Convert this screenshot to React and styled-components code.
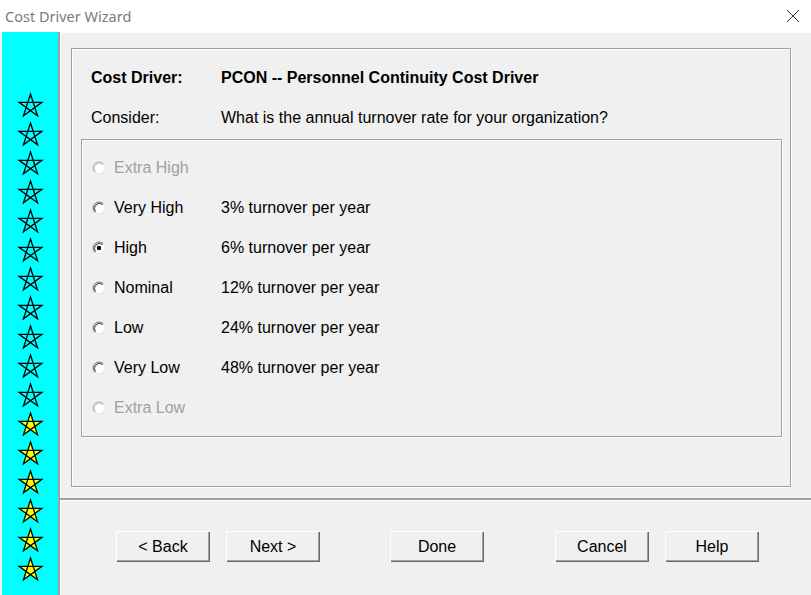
import React, { useState } from "react";
import styled, { createGlobalStyle } from "styled-components";

const GlobalStyle = createGlobalStyle`
  html, body {
    margin: 0;
    padding: 0;
    background: #f0f0f0;
  }
  body {
    font-family: "Liberation Sans", Arial, sans-serif;
  }
`;

const Window = styled.div`
  width: 811px;
  height: 595px;
  display: flex;
  flex-direction: column;
  overflow: hidden;
  background: #f0f0f0;
`;

const TitleBar = styled.div`
  height: 32px;
  flex: none;
  background: #fff;
  display: flex;
  align-items: center;
  justify-content: space-between;
  padding: 0 11px 0 5px;
  box-sizing: border-box;
`;

const Title = styled.span`
  font-family: "Noto Sans", "Open Sans", sans-serif;
  font-size: 14.5px;
  color: #7a7a7a;
`;

const Body = styled.div`
  flex: 1;
  display: flex;
  min-height: 0;
`;

const Sidebar = styled.div`
  width: 56px;
  flex: none;
  margin-left: 2px;
  background: #00ffff;
  border-right: 2px solid #a0a0a0;
  display: flex;
  flex-direction: column;
  align-items: center;
  padding-top: 60px;
  gap: 3px;
`;

const Main = styled.div`
  flex: 1;
  display: flex;
  flex-direction: column;
  border-left: 1px solid #fff;
  border-top: 1px solid #fff;
`;

const TopPanel = styled.div`
  height: 465px;
  flex: none;
  box-sizing: border-box;
  padding: 15px 20px 11px 10px;
  display: flex;
`;

const EtchedFrame = styled.div`
  flex: 1;
  border: 1px solid #a0a0a0;
  box-shadow: 1px 1px 0 #fff, inset 1px 1px 0 #fff;
  padding: 9px 8px 0 9px;
  display: flex;
  flex-direction: column;
`;

const InfoRow = styled.div`
  height: 40px;
  display: flex;
  align-items: center;
  padding-left: 10px;
  font-size: 16px;
  font-weight: ${(p) => (p.bold ? 700 : 400)};
  color: #000;
`;

const InfoLabel = styled.span`
  width: 130px;
  flex: none;
`;

const GroupBox = styled.div`
  margin-top: 1px;
  border: 1px solid #a0a0a0;
  box-shadow: 1px 1px 0 #fff, inset 1px 1px 0 #fff;
  padding: 8px 0 8px 10px;
`;

const OptionRow = styled.label`
  height: 40px;
  display: flex;
  align-items: center;
  font-size: 16px;
  color: ${(p) => (p.disabled ? "#a0a0a0" : "#000")};
  cursor: ${(p) => (p.disabled ? "default" : "pointer")};
`;

const OptionLabel = styled.span`
  width: 107px;
  flex: none;
  margin-left: 8px;
`;

const Separator = styled.div`
  height: 2px;
  flex: none;
  background: #a0a0a0;
  border-bottom: 1px solid #fff;
  margin-left: -1px;
`;

const ButtonBar = styled.div`
  flex: 1;
  display: flex;
  align-items: flex-start;
  padding: 30px 0 0 55px;
`;

const Button = styled.button`
  width: 94px;
  height: 31px;
  margin-left: ${(p) => p.offset || 0}px;
  background: #f0f0f0;
  font-family: "Liberation Sans", Arial, sans-serif;
  font-size: 16px;
  color: #000;
  border: none;
  box-shadow: inset 1px 1px 0 #fff, inset -1px -1px 0 #696969, inset -2px -2px 0 #a0a0a0;
  padding: 0;
  cursor: pointer;
`;

const starPath = "M13 2 L20.05 23.71 L1.59 10.29 L24.41 10.29 L5.95 23.71 Z";

const Star = ({ filled }) => (
  <svg width="27" height="26" viewBox="0 0 26 26">
    <path
      d={starPath}
      fill={filled ? "#ffff00" : "none"}
      stroke="#000"
      strokeWidth="1.3"
      strokeLinejoin="miter"
    />
  </svg>
);

const Radio = ({ checked, disabled }) => (
  <svg width="14" height="14" viewBox="0 0 14 14">
    <circle cx="7" cy="7" r="6" fill="#fff" />
    <path d="M2.76 11.24 A6 6 0 0 1 11.24 2.76" fill="none" stroke={disabled ? "#b4b4b4" : "#8a8a8a"} strokeWidth="1.2" />
    <path d="M3.5 10.5 A5 5 0 0 1 10.5 3.5" fill="none" stroke={disabled ? "#cfcfcf" : "#3c3c3c"} strokeWidth="1" />
    <path d="M11.24 2.76 A6 6 0 0 1 2.76 11.24" fill="none" stroke="#e6e6e6" strokeWidth="1" />
    {checked && <circle cx="7" cy="7" r="2.2" fill="#000" />}
  </svg>
);

const CloseIcon = () => (
  <svg width="14" height="14" viewBox="0 0 14 14">
    <path d="M1 1 L13 13 M13 1 L1 13" stroke="#333" strokeWidth="1" />
  </svg>
);

const options = [
  { name: "Extra High", desc: "", disabled: true },
  { name: "Very High", desc: "3% turnover per year" },
  { name: "High", desc: "6% turnover per year" },
  { name: "Nominal", desc: "12% turnover per year" },
  { name: "Low", desc: "24% turnover per year" },
  { name: "Very Low", desc: "48% turnover per year" },
  { name: "Extra Low", desc: "", disabled: true },
];

const stars = Array.from({ length: 17 }, (_, i) => i >= 11);

const App = () => {
  const [selected, setSelected] = useState("High");

  return (
    <Window>
      <GlobalStyle />
      <TitleBar>
        <Title>Cost Driver Wizard</Title>
        <CloseIcon />
      </TitleBar>
      <Body>
        <Sidebar>
          {stars.map((filled, i) => (
            <Star key={i} filled={filled} />
          ))}
        </Sidebar>
        <Main>
          <TopPanel>
            <EtchedFrame>
              <InfoRow bold>
                <InfoLabel>Cost Driver:</InfoLabel>
                <span>PCON -- Personnel Continuity Cost Driver</span>
              </InfoRow>
              <InfoRow>
                <InfoLabel>Consider:</InfoLabel>
                <span>What is the annual turnover rate for your organization?</span>
              </InfoRow>
              <GroupBox>
                {options.map((o) => (
                  <OptionRow
                    key={o.name}
                    disabled={o.disabled}
                    onClick={() => !o.disabled && setSelected(o.name)}
                  >
                    <Radio checked={selected === o.name} disabled={o.disabled} />
                    <OptionLabel>{o.name}</OptionLabel>
                    <span>{o.desc}</span>
                  </OptionRow>
                ))}
              </GroupBox>
            </EtchedFrame>
          </TopPanel>
          <Separator />
          <ButtonBar>
            <Button>&lt; Back</Button>
            <Button offset={16}>Next &gt;</Button>
            <Button offset={70}>Done</Button>
            <Button offset={71}>Cancel</Button>
            <Button offset={16}>Help</Button>
          </ButtonBar>
        </Main>
      </Body>
    </Window>
  );
};

export default App;
